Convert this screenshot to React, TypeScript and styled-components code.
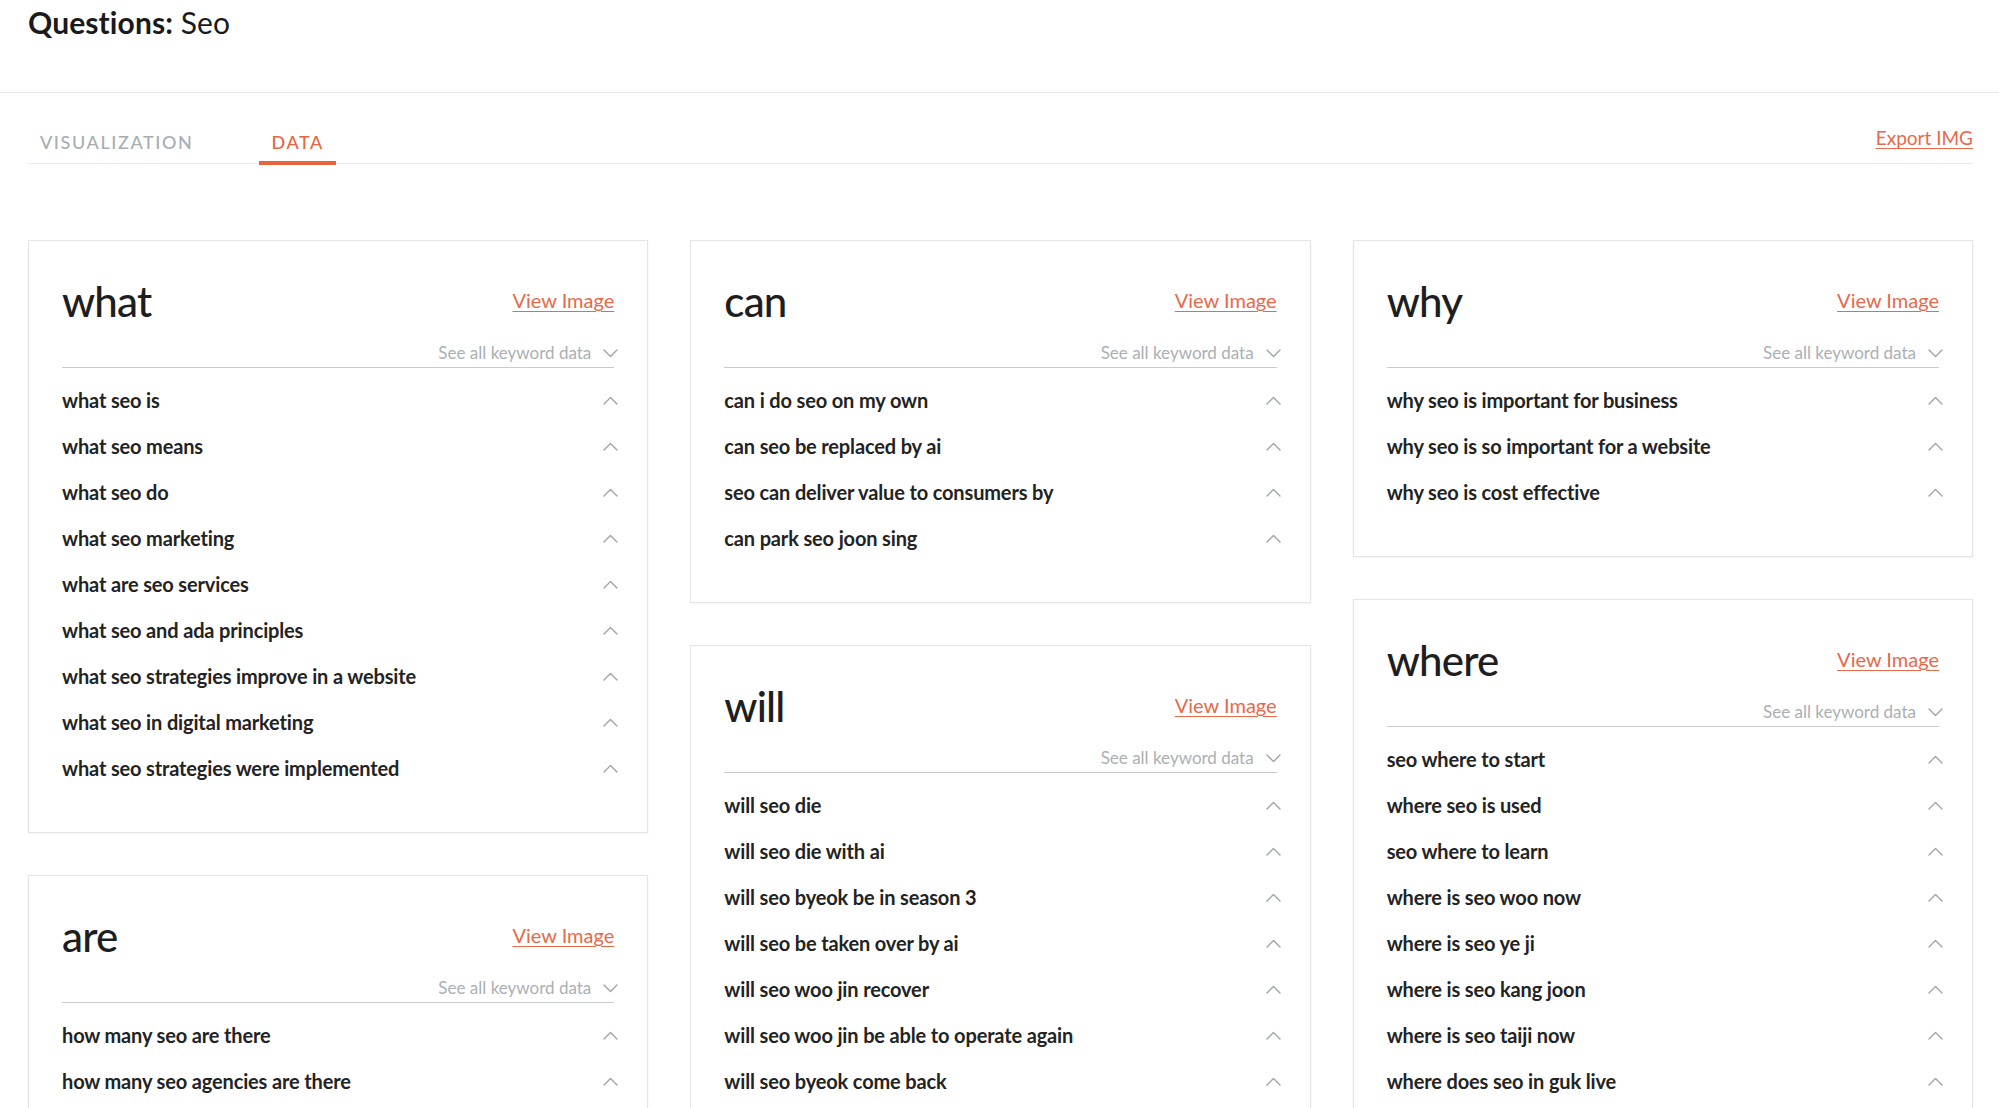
import React from "react";
import styled, { createGlobalStyle } from "styled-components";

const GlobalStyle = createGlobalStyle`
  html, body {
    margin: 0;
    padding: 0;
    background: #ffffff;
    overflow: hidden;
  }
  body {
    font-family: "Lato", "Liberation Sans", sans-serif;
    color: #1f1f1f;
  }
  * { box-sizing: border-box; }
`;

const Page = styled.div`
  width: 1999px;
  min-height: 1108px;
  background: #fff;
`;

const Header = styled.header`
  height: 93px;
  padding: 4px 28px 0;
  border-bottom: 1px solid #e9eaeb;
`;

const Title = styled.h1`
  margin: 0;
  font-size: 30px;
  line-height: 36px;
  font-weight: 400;
  color: #1a1a1a;
  letter-spacing: 0.1px;
  strong {
    font-weight: 700;
  }
`;

const TabBar = styled.nav`
  display: flex;
  align-items: flex-end;
  margin: 0 26px 0 28px;
  padding-top: 33px;
  border-bottom: 1px solid #ededed;
`;

const Tab = styled.button<{ $active?: boolean }>`
  position: relative;
  border: 0;
  background: none;
  padding: 0 12px 10px;
  margin-right: 54px;
  font-family: "Lato", "Liberation Sans", sans-serif;
  font-size: 18px;
  line-height: 22px;
  font-weight: 500;
  letter-spacing: 1.6px;
  text-transform: uppercase;
  color: ${(p) => (p.$active ? "#e8643c" : "#a7aeb2")};
  cursor: pointer;
  &::after {
    content: "";
    display: ${(p) => (p.$active ? "block" : "none")};
    position: absolute;
    left: 0;
    right: 0;
    bottom: -2px;
    height: 4px;
    background: #e8643c;
  }
`;

const ExportLink = styled.a`
  margin-left: auto;
  margin-bottom: 13px;
  font-size: 19px;
  line-height: 24px;
  color: #e8694a;
  text-decoration: underline;
  text-underline-offset: 3px;
  text-decoration-thickness: 1px;
  cursor: pointer;
`;

const Grid = styled.main`
  display: grid;
  grid-template-columns: repeat(3, 1fr);
  column-gap: 42px;
  margin: 76px 26px 0 28px;
  align-items: start;
`;

const Column = styled.div`
  display: flex;
  flex-direction: column;
  gap: 42px;
`;

const Card = styled.section`
  background: #fff;
  border: 1px solid #e4e5e6;
  box-shadow: 0 1px 2px rgba(0, 0, 0, 0.05);
  padding: 35px 33px 41px;
`;

const CardHead = styled.div`
  display: flex;
  align-items: center;
  justify-content: space-between;
  height: 50px;
`;

const Heading = styled.h2`
  margin: 0;
  font-size: 42px;
  line-height: 50px;
  font-weight: 500;
  color: #1e1e1e;
  letter-spacing: -0.8px;
`;

const ViewLink = styled.a`
  font-size: 20px;
  line-height: 24px;
  color: #e8694a;
  text-decoration: underline;
  text-underline-offset: 3px;
  text-decoration-thickness: 1px;
  margin-top: -2px;
  cursor: pointer;
`;

const SeeAll = styled.div`
  display: flex;
  align-items: center;
  justify-content: flex-end;
  gap: 12px;
  margin-top: 17px;
  padding-bottom: 4px;
  border-bottom: 1px solid #c9ccce;
  font-size: 17px;
  line-height: 20px;
  color: #aab0b4;
`;

const List = styled.ul`
  list-style: none;
  margin: 0;
  padding: 9px 0 0;
`;

const Item = styled.li`
  display: flex;
  align-items: center;
  justify-content: space-between;
  height: 46px;
  font-size: 20px;
  line-height: 46px;
  font-weight: 700;
  color: #232323;
  letter-spacing: -0.15px;
`;

const Chevron = styled.svg`
  flex: none;
  width: 15px;
  height: 9px;
  margin-right: -4px;
`;

const ChevronIcon: React.FC<{ up?: boolean }> = ({ up }) => (
  <Chevron viewBox="0 0 15 9" fill="none">
    <polyline
      points={up ? "1,8 7.5,1.5 14,8" : "1,1 7.5,7.5 14,1"}
      stroke="#9ea4a8"
      strokeWidth="1.4"
      strokeLinecap="round"
      strokeLinejoin="round"
    />
  </Chevron>
);

type Group = { title: string; items: string[] };

const columns: Group[][] = [
  [
    {
      title: "what",
      items: [
        "what seo is",
        "what seo means",
        "what seo do",
        "what seo marketing",
        "what are seo services",
        "what seo and ada principles",
        "what seo strategies improve in a website",
        "what seo in digital marketing",
        "what seo strategies were implemented",
      ],
    },
    {
      title: "are",
      items: [
        "how many seo are there",
        "how many seo agencies are there",
        "are seo services worth it",
        "are seo tools worth it",
      ],
    },
  ],
  [
    {
      title: "can",
      items: [
        "can i do seo on my own",
        "can seo be replaced by ai",
        "seo can deliver value to consumers by",
        "can park seo joon sing",
      ],
    },
    {
      title: "will",
      items: [
        "will seo die",
        "will seo die with ai",
        "will seo byeok be in season 3",
        "will seo be taken over by ai",
        "will seo woo jin recover",
        "will seo woo jin be able to operate again",
        "will seo byeok come back",
        "will seo ever die",
      ],
    },
  ],
  [
    {
      title: "why",
      items: [
        "why seo is important for business",
        "why seo is so important for a website",
        "why seo is cost effective",
      ],
    },
    {
      title: "where",
      items: [
        "seo where to start",
        "where seo is used",
        "seo where to learn",
        "where is seo woo now",
        "where is seo ye ji",
        "where is seo kang joon",
        "where is seo taiji now",
        "where does seo in guk live",
        "where is seo in guk from",
      ],
    },
  ],
];

const GroupCard: React.FC<{ group: Group }> = ({ group }) => (
  <Card>
    <CardHead>
      <Heading>{group.title}</Heading>
      <ViewLink>View Image</ViewLink>
    </CardHead>
    <SeeAll>
      <span>See all keyword data</span>
      <ChevronIcon />
    </SeeAll>
    <List>
      {group.items.map((it) => (
        <Item key={it}>
          <span>{it}</span>
          <ChevronIcon up />
        </Item>
      ))}
    </List>
  </Card>
);

export default function App() {
  return (
    <Page>
      <GlobalStyle />
      <Header>
        <Title>
          <strong>Questions:</strong> Seo
        </Title>
      </Header>
      <TabBar>
        <Tab>Visualization</Tab>
        <Tab $active>Data</Tab>
        <ExportLink>Export IMG</ExportLink>
      </TabBar>
      <Grid>
        {columns.map((col, i) => (
          <Column key={i}>
            {col.map((g) => (
              <GroupCard key={g.title} group={g} />
            ))}
          </Column>
        ))}
      </Grid>
    </Page>
  );
}
